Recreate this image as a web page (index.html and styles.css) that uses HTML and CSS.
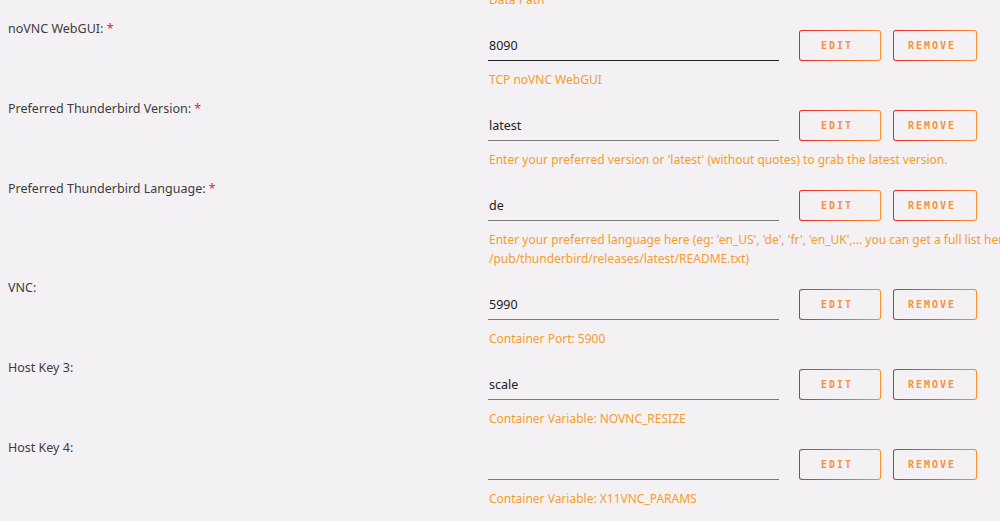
FILE: index.html
```html
<!DOCTYPE html>
<html lang="en">
<head>
  <meta charset="UTF-8">
  <title>Update Container</title>
  <link rel="stylesheet" href="styles.css">
</head>
<body>
  <form action="" method="post" id="template" class="template">
    <div class="setting">
      <label class="setting-label">Data Path:</label>
      <div class="setting-body">
        <div class="controls">
          <input class="field" type="text" value="/mnt/user/appdata/thunderbird">
          <button type="button" class="btn">Edit</button>
          <button type="button" class="btn">Remove</button>
        </div>
        <p class="help">Data Path</p>
      </div>
    </div>

    <div class="setting">
      <label class="setting-label">noVNC WebGUI: <span class="req">*</span></label>
      <div class="setting-body">
        <div class="controls">
          <input class="field active" type="text" value="8090">
          <button type="button" class="btn">Edit</button>
          <button type="button" class="btn">Remove</button>
        </div>
        <p class="help">TCP noVNC WebGUI</p>
      </div>
    </div>

    <div class="setting">
      <label class="setting-label">Preferred Thunderbird Version: <span class="req">*</span></label>
      <div class="setting-body">
        <div class="controls">
          <input class="field" type="text" value="latest">
          <button type="button" class="btn">Edit</button>
          <button type="button" class="btn">Remove</button>
        </div>
        <p class="help">Enter your preferred version or 'latest' (without quotes) to grab the latest version.</p>
      </div>
    </div>

    <div class="setting">
      <label class="setting-label">Preferred Thunderbird Language: <span class="req">*</span></label>
      <div class="setting-body">
        <div class="controls">
          <input class="field" type="text" value="de">
          <button type="button" class="btn">Edit</button>
          <button type="button" class="btn">Remove</button>
        </div>
        <p class="help">Enter your preferred language here (eg: 'en_US', 'de', 'fr', 'en_UK',... you can get a full list here:<br>/pub/thunderbird/releases/latest/README.txt)</p>
      </div>
    </div>

    <div class="setting">
      <label class="setting-label">VNC:</label>
      <div class="setting-body">
        <div class="controls">
          <input class="field" type="text" value="5990">
          <button type="button" class="btn">Edit</button>
          <button type="button" class="btn">Remove</button>
        </div>
        <p class="help">Container Port: 5900</p>
      </div>
    </div>

    <div class="setting">
      <label class="setting-label">Host Key 3:</label>
      <div class="setting-body">
        <div class="controls">
          <input class="field" type="text" value="scale">
          <button type="button" class="btn">Edit</button>
          <button type="button" class="btn">Remove</button>
        </div>
        <p class="help">Container Variable: NOVNC_RESIZE</p>
      </div>
    </div>

    <div class="setting">
      <label class="setting-label">Host Key 4:</label>
      <div class="setting-body">
        <div class="controls">
          <input class="field" type="text" value="">
          <button type="button" class="btn">Edit</button>
          <button type="button" class="btn">Remove</button>
        </div>
        <p class="help">Container Variable: X11VNC_PARAMS</p>
      </div>
    </div>
  </form>
</body>
</html>
```

FILE: styles.css
```css
html, body {
  overflow: hidden;
}

body {
  margin: 0;
  background: #f4f1f4;
  color: #3c3c3c;
  font-family: "Noto Sans", "Open Sans", sans-serif;
  font-size: 12px;
}

.template {
  margin-top: -59px;
  padding-left: 8px;
}

.setting {
  display: grid;
  grid-template-columns: 480px 1fr;
  margin-bottom: 12px;
}

.setting-label {
  font-size: 12.5px;
  line-height: 16px;
  white-space: nowrap;
}

.req {
  color: #e22828;
}

.setting-body {
  padding-top: 9px;
}

.controls {
  display: flex;
  align-items: center;
}

.field {
  box-sizing: border-box;
  width: 291px;
  height: 31px;
  margin: 0 20px 0 0;
  padding: 0 1px;
  border: 0;
  border-bottom: 1px solid #7a7a7a;
  background: transparent;
  color: #222;
  font-family: inherit;
  font-size: 12.5px;
  outline: 0;
}

.field.active {
  border-bottom-color: #222;
}

/* gradient outline buttons */
.btn {
  box-sizing: border-box;
  height: 31px;
  min-width: 82px;
  margin-right: 12px;
  padding: 0 18px 0 12px;
  border: 1px solid transparent;
  border-radius: 3px;
  background:
    linear-gradient(#f4f1f4, #f4f1f4) padding-box,
    linear-gradient(90deg, #e22828, #ff8c2f) border-box;
  color: #f7923a;
  cursor: pointer;
  font-family: "DejaVu Sans Mono", monospace;
  font-size: 10px;
  font-weight: bold;
  letter-spacing: 2px;
  text-transform: uppercase;
}

.btn + .btn {
  min-width: 84px;
}

.help {
  margin: 9px 0 0;
  padding-left: 1px;
  width: 700px;
  line-height: 19px;
  color: #f29d2e;
  font-size: 12px;
}
```
